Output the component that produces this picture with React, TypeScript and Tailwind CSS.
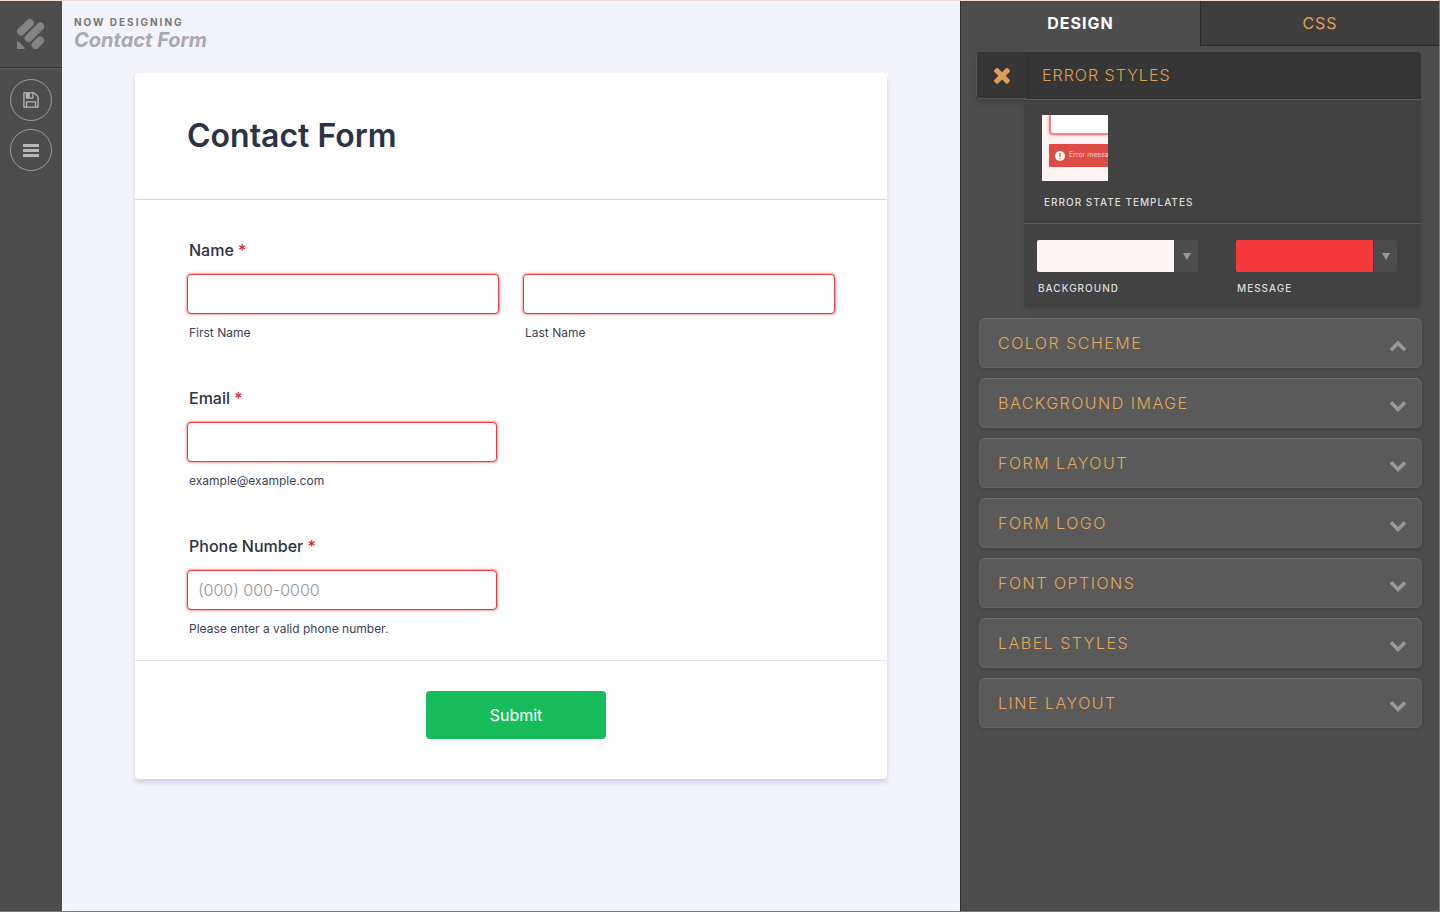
import React from "react";

interface IconProps {
  className?: string;
}

interface FieldProps {
  id: string;
  hint: string;
  placeholder?: string;
  label?: string;
}

interface SwatchProps {
  id: string;
  label: string;
  color: string;
}

const sections = [
  { title: "Color Scheme", open: true },
  { title: "Background Image", open: false },
  { title: "Form Layout", open: false },
  { title: "Form Logo", open: false },
  { title: "Font Options", open: false },
  { title: "Label Styles", open: false },
  { title: "Line Layout", open: false },
];

function LogoIcon({ className }: IconProps) {
  return (
    <svg className={className} viewBox="0 0 28 30" fill="none">
      <g stroke="currentColor" strokeWidth={7.8} strokeLinecap="round">
        <path d="M3.9 12.6L12.9 3.9" />
        <path d="M11.5 19.3L23.2 7.4" />
        <path d="M18.4 26.1L23.2 21.4" />
      </g>
      <path
        fill="currentColor"
        d="M0 23.2c0-.9.9-1.2 1.5-.6l6 6c.6.6.2 1.4-.6 1.4H1c-.6 0-1-.4-1-1z"
      />
    </svg>
  );
}

function SaveIcon({ className }: IconProps) {
  return (
    <svg className={className} viewBox="0 0 1792 1792" fill="currentColor">
      <path d="M512 1536h768v-384h-768v384zm896 0h128v-896q0-14-10-38.5t-20-34.5l-281-281q-10-10-34-20t-39-10v416q0 40-28 68t-68 28h-576q-40 0-68-28t-28-68v-416h-128v1280h128v-416q0-40 28-68t68-28h832q40 0 68 28t28 68v416zm-384-928v-320q0-13-9.5-22.5t-22.5-9.5h-192q-13 0-22.5 9.5t-9.5 22.5v320q0 13 9.5 22.5t22.5 9.5h192q13 0 22.5-9.5t9.5-22.5zm640 32v928q0 40-28 68t-68 28h-1344q-40 0-68-28t-28-68v-1344q0-40 28-68t68-28h928q40 0 88 20t76 48l280 280q28 28 48 76t20 88z" />
    </svg>
  );
}

function BarsIcon({ className }: IconProps) {
  return (
    <svg className={className} viewBox="0 0 18 18" fill="currentColor">
      <rect x="1" y="3" width="16" height="3" rx="0.5" />
      <rect x="1" y="8" width="16" height="3" rx="0.5" />
      <rect x="1" y="13" width="16" height="3" rx="0.5" />
    </svg>
  );
}

function CloseIcon({ className }: IconProps) {
  return (
    <svg className={className} viewBox="0 0 1792 1792" fill="currentColor">
      <path d="M1490 1322q0 40-28 68l-136 136q-28 28-68 28t-68-28l-294-294-294 294q-28 28-68 28t-68-28l-136-136q-28-28-28-68t28-68l294-294-294-294q-28-28-28-68t28-68l136-136q28-28 68-28t68 28l294 294 294-294q28-28 68-28t68 28l136 136q28 28 28 68t-28 68l-294 294 294 294q28 28 28 68z" />
    </svg>
  );
}

function ChevronDownIcon({ className }: IconProps) {
  return (
    <svg className={className} viewBox="0 0 1792 1792" fill="currentColor">
      <path d="M1683 808l-742 741q-19 19-45 19t-45-19l-742-741q-19-19-19-45.5t19-45.5l166-165q19-19 45-19t45 19l531 531 531-531q19-19 45-19t45 19l166 165q19 19 19 45.5t-19 45.5z" />
    </svg>
  );
}

function ChevronUpIcon({ className }: IconProps) {
  return (
    <svg className={className} viewBox="0 0 1792 1792" fill="currentColor">
      <path d="M1683 1331l-166 165q-19 19-45 19t-45-19l-531-531-531 531q-19 19-45 19t-45-19l-166-165q-19-19-19-45.5t19-45.5l742-741q19-19 45-19t45 19l742 741q19 19 19 45.5t-19 45.5z" />
    </svg>
  );
}

function Required() {
  return <span className="text-[#e02424]">*</span>;
}

function Field({ id, label, hint, placeholder }: FieldProps) {
  return (
    <div className="flex flex-col">
      {label && (
        <label
          htmlFor={id}
          className="mb-3 pl-[2px] text-base leading-6 font-medium"
        >
          {label} <Required />
        </label>
      )}
      <input
        id={id}
        type="text"
        placeholder={placeholder}
        aria-label={label ? undefined : hint}
        aria-describedby={`${id}-hint`}
        className="h-10 w-full rounded border border-[#f23a3c] bg-white px-[10px] text-base font-light shadow-[0_0_3px_#f23a3c] outline-none placeholder:text-[#949494]"
      />
      <span
        id={`${id}-hint`}
        className="mt-2 pl-[2px] text-xs leading-[22px] text-[#3b4257]"
      >
        {hint}
      </span>
    </div>
  );
}

function Sidebar() {
  return (
    <nav className="flex w-[62px] shrink-0 flex-col bg-[#4d4d4d]">
      <a
        href="#"
        aria-label="Home"
        className="flex h-[67px] justify-center border-b border-[#333] pt-[18px]"
      >
        <LogoIcon className="h-[30px] w-[28px] text-[#838383]" />
      </a>
      <div className="flex flex-col items-center gap-2 border-t border-[#5a5a5a] pt-[10px]">
        <button
          aria-label="Save"
          className="flex h-[42px] w-[42px] items-center justify-center rounded-full border border-[#999] text-[#b8b8b8]"
        >
          <SaveIcon className="h-[18px] w-[18px]" />
        </button>
        <button
          aria-label="Menu"
          className="flex h-[42px] w-[42px] items-center justify-center rounded-full border border-[#999] text-[#b8b8b8]"
        >
          <BarsIcon className="h-[18px] w-[18px]" />
        </button>
      </div>
    </nav>
  );
}

function ContactForm() {
  return (
    <form
      className="mx-auto mt-[22px] w-full max-w-[752px] rounded bg-white text-[#2c3345] shadow-[0_4px_4px_rgba(87,100,126,0.21)]"
      onSubmit={(e) => e.preventDefault()}
    >
      <div className="border-b border-[#d7d8e1] px-[52px] pt-[43px] pb-[43px]">
        <h1 className="text-[32px] leading-10 font-semibold">Contact Form</h1>
      </div>
      <div className="flex flex-col gap-[42px] px-[52px] pt-[38px] pb-5">
        <fieldset>
          <legend className="mb-3 pl-[2px] text-base leading-6 font-medium">
            Name <Required />
          </legend>
          <div className="grid grid-cols-2 gap-6">
            <Field id="first" hint="First Name" />
            <Field id="last" hint="Last Name" />
          </div>
        </fieldset>
        <div className="max-w-[310px]">
          <Field id="email" label="Email" hint="example@example.com" />
        </div>
        <div className="max-w-[310px]">
          <Field
            id="phone"
            label="Phone Number"
            hint="Please enter a valid phone number."
            placeholder="(000) 000-0000"
          />
        </div>
      </div>
      <div className="flex justify-center border-t border-[#e3e5f5] pt-[30px] pb-10 pl-[10px]">
        <button
          type="submit"
          className="h-12 w-[180px] rounded bg-[#18bd5b] text-base text-white"
        >
          Submit
        </button>
      </div>
    </form>
  );
}

function ErrorThumbnail() {
  return (
    <button
      aria-label="Error state templates"
      className="block h-[66px] w-[66px] overflow-hidden bg-[#fff4f3] pl-[7px] text-left"
    >
      <div className="h-5 w-20 rounded-bl border-b-2 border-l-2 border-[#ee8585] bg-white shadow-[0_0_3px_#f08080]" />
      <div className="mt-[9px] flex h-[23px] items-center gap-1 rounded-l-[1px] bg-[#df4c46] pl-[6px]">
        <svg className="h-[10px] w-[10px] shrink-0" viewBox="0 0 10 10">
          <circle cx="5" cy="5" r="5" fill="#fff" />
          <path d="M5 2v4M5 7v1" stroke="#df4c46" strokeWidth={1.3} />
        </svg>
        <span className="text-[7px] whitespace-nowrap text-[#fbd5d2]">
          Error messa
        </span>
      </div>
      <div className="h-[14px]" />
    </button>
  );
}

function Swatch({ id, label, color }: SwatchProps) {
  return (
    <div className="flex flex-col">
      <button
        id={id}
        aria-labelledby={`${id}-label`}
        className="flex h-8 w-[161px] overflow-hidden rounded-[2px] bg-[#4d4d4d]"
      >
        <span className="h-full flex-1" style={{ backgroundColor: color }} />
        <span className="flex h-full w-6 items-center justify-center border-l border-[#444]">
          <svg className="h-[7px] w-2 text-[#999]" viewBox="0 0 8 7">
            <path d="M0 0h8L4 7z" fill="currentColor" />
          </svg>
        </span>
      </button>
      <span
        id={`${id}-label`}
        className="mt-2 pl-px text-[10px] leading-4 font-medium tracking-[1px] text-[#ddd] uppercase"
      >
        {label}
      </span>
    </div>
  );
}

function ErrorStyles() {
  return (
    <section className="mt-[5px] mr-[18px] ml-[15px]">
      <div className="flex h-12 items-stretch rounded-t border-t border-[#505050] bg-[#363636]">
        <button
          aria-label="Close"
          className="flex w-[50px] items-center justify-center rounded-l border-b border-l border-[#555] bg-[#363636] text-[#db9f56] shadow-[0_4px_8px_rgba(0,0,0,0.15)]"
        >
          <CloseIcon className="h-6 w-6" />
        </button>
        <h2 className="flex items-center pb-px pl-4 text-base font-light tracking-[1px] text-[#e0a155] uppercase">
          Error Styles
        </h2>
      </div>
      <div className="ml-12 rounded-b bg-[#424242] shadow-[0_2px_6px_rgba(0,0,0,0.1)]">
        <div className="border-y border-[#5c5c5c] px-[18px] pt-[15px] pb-[13px]">
          <ErrorThumbnail />
          <p className="mt-[13px] pl-[2px] text-[10px] leading-4 font-medium tracking-[1px] text-[#ddd] uppercase">
            Error State Templates
          </p>
        </div>
        <div className="flex gap-[38px] pt-4 pb-[11px] pl-[13px]">
          <Swatch id="bg" label="Background" color="#fff4f3" />
          <Swatch id="msg" label="Message" color="#f3393b" />
        </div>
      </div>
    </section>
  );
}

function DesignPanel() {
  return (
    <aside className="w-[479px] shrink-0 border-l border-[#333] bg-[#4d4d4d]">
      <div role="tablist" className="grid h-[45px] grid-cols-2">
        <button
          role="tab"
          aria-selected="true"
          className="border-b border-transparent text-base font-bold tracking-[1px] text-white"
        >
          DESIGN
        </button>
        <button
          role="tab"
          aria-selected="false"
          className="border-b border-l border-[#2c2c2c] bg-[#3e3e3e] text-base tracking-[1px] text-[#e0a155]"
        >
          CSS
        </button>
      </div>
      <ErrorStyles />
      <div className="mt-[11px] mr-[17px] ml-[18px] flex flex-col gap-[10px]">
        {sections.map((section) => (
          <button
            key={section.title}
            aria-expanded={section.open}
            className="flex h-[50px] items-center justify-between rounded-md border border-[#636363] border-t-[#6e6e6e] bg-[#5a5a5a] pr-[14px] pl-[18px] shadow-[0_1px_4px_rgba(0,0,0,0.15)]"
          >
            <span className="text-base font-light tracking-[1.5px] text-[#e3a857] uppercase">
              {section.title}
            </span>
            {section.open ? (
              <ChevronUpIcon className="mt-1 h-[18px] w-[18px] text-[#999]" />
            ) : (
              <ChevronDownIcon className="mt-1 h-[18px] w-[18px] text-[#999]" />
            )}
          </button>
        ))}
      </div>
    </aside>
  );
}

export default function App() {
  return (
    <div className="flex min-h-screen border-t border-r border-b border-t-[#f5dfd3] border-r-[#7c7c7c] border-b-[#7c7878] bg-[#f3f3fe] font-['Inter',sans-serif]">
      <Sidebar />
      <main className="min-w-0 flex-1 px-3 pt-[15px]">
        <p className="text-[10px] leading-3 font-bold tracking-[2px] text-[#777] uppercase">
          Now Designing
        </p>
        <p className="pt-px text-xl leading-[22px] font-bold text-[#a9a9b0] italic">
          Contact Form
        </p>
        <ContactForm />
      </main>
      <DesignPanel />
    </div>
  );
}
